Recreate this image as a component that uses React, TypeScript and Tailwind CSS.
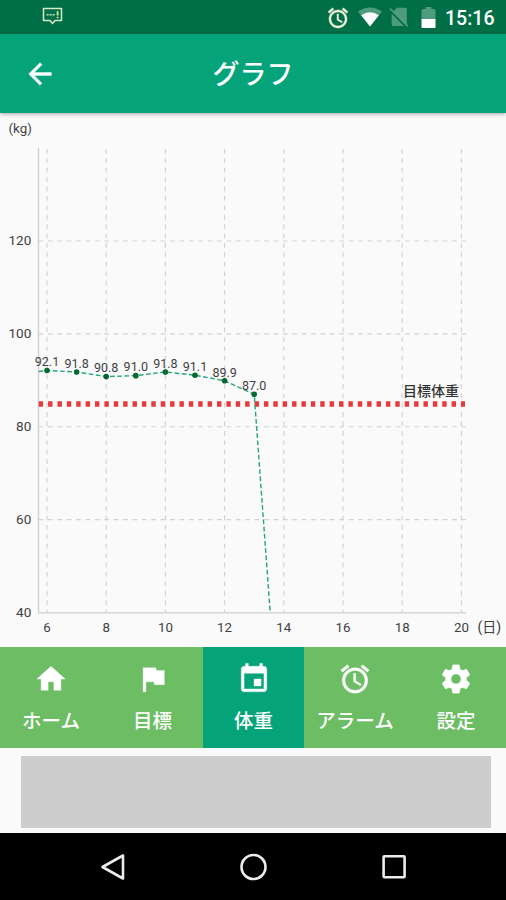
import type { ReactNode } from "react";

const HOME = "M10 20v-6h4v6h5v-8h3L12 3 2 12h3v8z";
const FLAG = "M14.4 6L14 4H5v17h2v-7h5.6l.4 2h7V6z";
const EVENT =
  "M17 12h-5v5h5v-5zM16 1v2H8V1H6v2H5c-1.11 0-1.99.9-1.99 2L3 19c0 1.1.89 2 2 2h14c1.1 0 2-.9 2-2V5c0-1.1-.9-2-2-2h-1V1h-2zm3 18H5V8h14v11z";
const ALARM =
  "M22 5.72l-4.6-3.86-1.29 1.53 4.6 3.86L22 5.72zM7.88 3.39L6.6 1.86 2 5.71l1.29 1.53 4.59-3.85zM12.5 8H11v6l4.75 2.85.75-1.23-4-2.37V8zM12 4c-4.97 0-9 4.03-9 9s4.02 9 9 9c4.97 0 9-4.03 9-9s-4.03-9-9-9zm0 16c-3.87 0-7-3.13-7-7s3.13-7 7-7 7 3.13 7 7-3.13 7-7 7z";
const SETTINGS =
  "M19.43 12.98c.04-.32.07-.64.07-.98s-.03-.66-.07-.98l2.11-1.65c.19-.15.24-.42.12-.64l-2-3.46c-.12-.22-.39-.3-.61-.22l-2.49 1c-.52-.4-1.08-.73-1.69-.98l-.38-2.65C14.46 2.18 14.25 2 14 2h-4c-.25 0-.46.18-.49.42l-.38 2.65c-.61.25-1.17.59-1.69.98l-2.49-1c-.23-.09-.49 0-.61.22l-2 3.46c-.13.22-.07.49.12.64l2.11 1.65c-.04.32-.07.65-.07.98s.03.66.07.98l-2.11 1.65c-.19.15-.24.42-.12.64l2 3.46c.12.22.39.3.61.22l2.49-1c.52.4 1.08.73 1.69.98l.38 2.65c.03.24.24.42.49.42h4c.25 0 .46-.18.49-.42l.38-2.65c.61-.25 1.17-.59 1.69-.98l2.49 1c.23.09.49 0 .61-.22l2-3.46c.12-.22.07-.49-.12-.64l-2.11-1.65zM12 15.5c-1.93 0-3.5-1.57-3.5-3.5s1.57-3.5 3.5-3.5 3.5 1.57 3.5 3.5-1.57 3.5-3.5 3.5z";

function Icon({ className, children }: { className: string; children: ReactNode }) {
  return (
    <svg viewBox="0 0 24 24" fill="currentColor" className={className}>
      {children}
    </svg>
  );
}

function StatusBar() {
  return (
    <div className="flex h-[34px] items-center bg-[#006f48] pr-[11px] pl-[42px] text-white">
      <svg viewBox="0 0 21 19" className="-mt-0.5 h-[19px] w-[21px]" fill="none">
        <path
          d="M1.5 1.5h18v12h-6.500l-2.500 3-2.500-3H1.500z"
          stroke="#d6e8c8"
          strokeWidth="1.500"
          strokeLinejoin="round"
        />
        <path d="M4.500 7.800h8.500" stroke="#c2dcb4" strokeWidth="1.400" strokeDasharray="2.200 .8" />
        <path d="M15.600 4.200v4.300m0 1.200v1.500" stroke="#d9f58c" strokeWidth="1.700" />
      </svg>
      <div className="ml-auto flex items-center">
        <Icon className="mt-px h-[24px] w-[24px] text-[#f1f6dc]">
          <path d={ALARM} stroke="currentColor" strokeWidth=".4" />
        </Icon>
        <svg viewBox="0 0 24 20" className="ml-[8px] h-[20px] w-[24px]">
          <path d="M0 4.500Q12-3.500 24 4.500L12 19.500z" fill="#4f9b7e" />
          <path d="M3.200 8.200Q12 2.300 20.800 8.200L12 19.500z" fill="#fff" />
        </svg>
        <svg viewBox="0 0 20 20" className="ml-[7px] h-[20px] w-[20px]">
          <path d="M8 .8h8.500a1.300 1.300 0 0 1 1.300 1.300V19H4a1.300 1.300 0 0 1-1.300-1.300V6z" fill="#4f9b7e" />
          <path d="M.3 2.300L18 20" stroke="#006f48" strokeWidth="3" />
          <path d="M1 1.500L18.700 19.200" stroke="#5ba388" strokeWidth="1.500" />
        </svg>
        <svg viewBox="0 0 15 22" className="mt-px ml-[12px] h-[22px] w-[15px]">
          <path d="M4.500 0h6v2h2A2 2 0 0 1 14.500 4v8H.5V4a2 2 0 0 1 2-2h2z" fill="#4f9b7e" />
          <path d="M.5 12h14v8a1 1 0 0 1-1 1h-12a1 1 0 0 1-1-1z" fill="#fff" />
        </svg>
        <span className="mt-[3px] ml-[9px] w-[50px] font-[Roboto,sans-serif] text-[19.5px] leading-6 font-medium whitespace-nowrap">
          15:16
        </span>
      </div>
    </div>
  );
}

const X0 = 47;
const DAY = 29.6;
const xOf = (day: number) => X0 + (day - 6) * DAY;
const yOf = (kg: number) => 612.5 - (kg - 40) * 4.644;

const weights = [92.1, 91.8, 90.8, 91.0, 91.8, 91.1, 89.9, 87.0];
const days = [6, 8, 10, 12, 14, 16, 18, 20];
const scale = [120, 100, 80, 60];

function Chart() {
  const line = [
    `${38.5},${yOf(91.9)}`,
    ...weights.map((w, i) => `${xOf(6 + i)},${yOf(w)}`),
    `${xOf(14)},${yOf(0)}`,
  ].join(" ");
  return (
    <svg
      viewBox="0 113 506 534"
      className="block h-[534px] w-[506px] font-[Roboto,'Noto_Sans_CJK_JP',sans-serif] text-[12.5px]"
      fill="#3f3f3f"
    >
      <defs>
        <clipPath id="plot">
          <rect x="38" y="148" width="430" height="465" />
        </clipPath>
      </defs>
      <text x="8.500" y="133.300" fontSize="13.300">(kg)</text>
      <g stroke="#d2d2d2" strokeWidth="1.200" strokeDasharray="4.700 4.700">
        {days.map((d) => (
          <path key={d} d={`M${xOf(d)} 149V612`} />
        ))}
        {scale.map((s) => (
          <path key={s} d={`M38.500 ${yOf(s)}H466`} />
        ))}
      </g>
      <path d="M38.500 148V612.900H466" fill="none" stroke="#d0d0d0" strokeWidth="1.300" />
      {[...scale, 40].map((s) => (
        <text key={s} x="31.300" y={yOf(s) + 4.200} textAnchor="end" fontSize="13.500">
          {s}
        </text>
      ))}
      {days.map((d) => (
        <text key={d} x={xOf(d)} y="631.800" textAnchor="middle" fontSize="13.300">
          {d}
        </text>
      ))}
      <text x="477.500" y="632" fontSize="14">(日)</text>
      <path d="M38.700 404H465" stroke="#e5393b" strokeWidth="5.500" strokeDasharray="4.400 4.985" />
      <text x="403" y="396" fontSize="14" fontWeight="500" fill="#333">
        目標体重
      </text>
      <polyline
        points={line}
        clipPath="url(#plot)"
        fill="none"
        stroke="#25a57c"
        strokeWidth="1.400"
        strokeDasharray="4.700 2.500"
      />
      {weights.map((w, i) => (
        <g key={i}>
          <circle cx={xOf(6 + i)} cy={yOf(w)} r="2.800" fill="#04682f" />
          <text x={xOf(6 + i)} y={yOf(w) - 4.200} textAnchor="middle">
            {w.toFixed(1)}
          </text>
        </g>
      ))}
    </svg>
  );
}

const tabs = [
  { label: "ホーム", icon: HOME, active: false },
  { label: "目標", icon: FLAG, active: false },
  { label: "体重", icon: EVENT, active: true },
  { label: "アラーム", icon: ALARM, active: false },
  { label: "設定", icon: SETTINGS, active: false },
];

export default function App() {
  return (
    <div className="flex h-[900px] w-[506px] flex-col overflow-hidden bg-[#fafafa] font-[Roboto,'Noto_Sans_CJK_JP',sans-serif]">
      <StatusBar />
      <header className="relative grid h-[79px] shrink-0 grid-cols-[80px_1fr_80px] items-center bg-[#04a37a] text-white shadow-[0_1px_4px_rgba(0,0,0,0.35)]">
        <Icon className="ml-[23px] h-[34px] w-[34px]">
          <path
            d="M20 11H7.830l5.590-5.590L12 4l-8 8 8 8 1.410-1.410L7.830 13H20v-2z"
            stroke="currentColor"
            strokeWidth=".3"
          />
        </Icon>
        <h1 className="mt-[3px] text-center text-[27px] leading-8 font-medium">グラフ</h1>
      </header>
      <main className="h-[534px] shrink-0">
        <Chart />
      </main>
      <nav className="grid h-[101px] shrink-0 grid-cols-[102px_101px_101px_102px_100px]">
        {tabs.map((t) => (
          <div
            key={t.label}
            className={
              t.active
                ? "flex flex-col items-center bg-[#04a37a] pt-[15px] font-medium text-white"
                : "flex flex-col items-center bg-[#6cbd64] pt-[15px] font-medium text-white"
            }
          >
            <Icon className="h-[34px] w-[34px]">
              <path d={t.icon} stroke="currentColor" strokeWidth=".25" />
            </Icon>
            <span className="mt-[14px] text-[19.5px] leading-6 whitespace-nowrap">{t.label}</span>
          </div>
        ))}
      </nav>
      <div className="h-[85px] shrink-0 pt-2 pr-[15px] pl-[21px]">
        <div className="h-[72px] bg-[#cdcdcd]" />
      </div>
      <div className="flex h-[67px] shrink-0 items-center justify-center gap-[110px] bg-black pl-px">
        <svg viewBox="0 0 30 30" className="h-[30px] w-[30px]" fill="none" stroke="#ececec" strokeWidth="2.600">
          <path d="M24 3.500v23L3.500 15z" strokeLinejoin="round" />
        </svg>
        <svg viewBox="0 0 30 30" className="h-[30px] w-[30px]" fill="none" stroke="#ececec" strokeWidth="2.600">
          <circle cx="14.500" cy="15" r="12" />
        </svg>
        <svg viewBox="0 0 30 30" className="h-[30px] w-[30px]" fill="none" stroke="#ececec" strokeWidth="2.600">
          <rect x="4.600" y="4.300" width="21" height="21" rx=".8" />
        </svg>
      </div>
    </div>
  );
}
